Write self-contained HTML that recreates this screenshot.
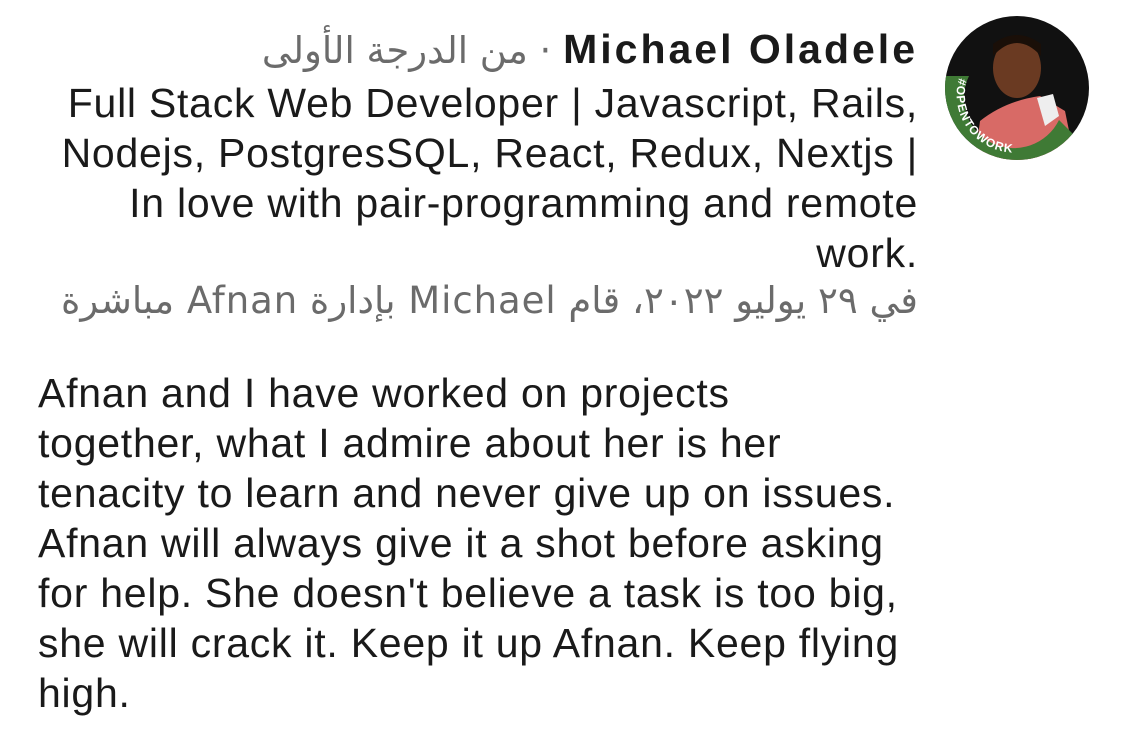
<!DOCTYPE html>
<html><head><meta charset="utf-8"><style>
body{margin:0;width:1125px;height:731px;background:#fff;overflow:hidden;font-family:"Liberation Sans","Noto Sans CJK SC",sans-serif;color:#1a1a1a;position:relative}
.l{position:absolute;font-size:41px;line-height:50px;white-space:nowrap;letter-spacing:0.75px}
.r{right:207px;text-align:right}
.g{color:#6b6b6b}
</style></head><body>
<div class="l r" style="top:24px"><span class="g" style="font-family:'DejaVu Sans',sans-serif;font-size:37px;letter-spacing:1.5px">من الدرجة الأولى · </span><b style="letter-spacing:3px">Michael Oladele</b></div>
<div class="l r" style="top:78px">Full Stack Web Developer | Javascript, Rails,</div>
<div class="l r" style="top:128px">Nodejs, PostgresSQL, React, Redux, Nextjs |</div>
<div class="l r" style="top:178px">In love with pair-programming and remote</div>
<div class="l r" style="top:228px">work.</div>
<div class="l r g" style="top:276px;font-family:'DejaVu Sans',sans-serif;font-size:37px;letter-spacing:0.95px" dir="rtl">في ٢٩ يوليو ٢٠٢٢، قام Michael بإدارة Afnan مباشرة</div>
<div class="l" style="left:38px;top:368px">Afnan and I have worked on projects<br>together, what I admire about her is her<br>tenacity to learn and never give up on issues.<br>Afnan will always give it a shot before asking<br>for help. She doesn't believe a task is too big,<br>she will crack it. Keep it up Afnan. Keep flying<br>high.</div>
<svg style="position:absolute;left:945px;top:16px" width="144" height="144" viewBox="0 0 144 144">
<defs><clipPath id="c"><circle cx="72" cy="72" r="72"/></clipPath>
<path id="arc" d="M14,62 A58,58 0 0,0 108,122"/></defs>
<g clip-path="url(#c)">
<rect width="144" height="144" fill="#111"/>
<path d="M30,144 L35,105 Q60,85 95,80 L120,95 L130,144Z" fill="#d86a66"/>
<path d="M92,82 L108,78 L114,100 L100,110Z" fill="#eee"/>
<ellipse cx="72" cy="52" rx="24" ry="30" fill="#6a3a22"/>
<path d="M48,40 Q72,14 96,40 L96,28 Q72,10 48,28Z" fill="#1a0f08"/>
<path d="M0,60 A72,72 0 0,0 130,120 L114,104 A50,50 0 0,1 24,60Z" fill="#3f7a35"/>
</g>
<text font-family="Liberation Sans" font-weight="bold" font-size="12" fill="#fff" letter-spacing="1"><textPath href="#arc">#OPENTOWORK</textPath></text>
</svg>
</body></html>
